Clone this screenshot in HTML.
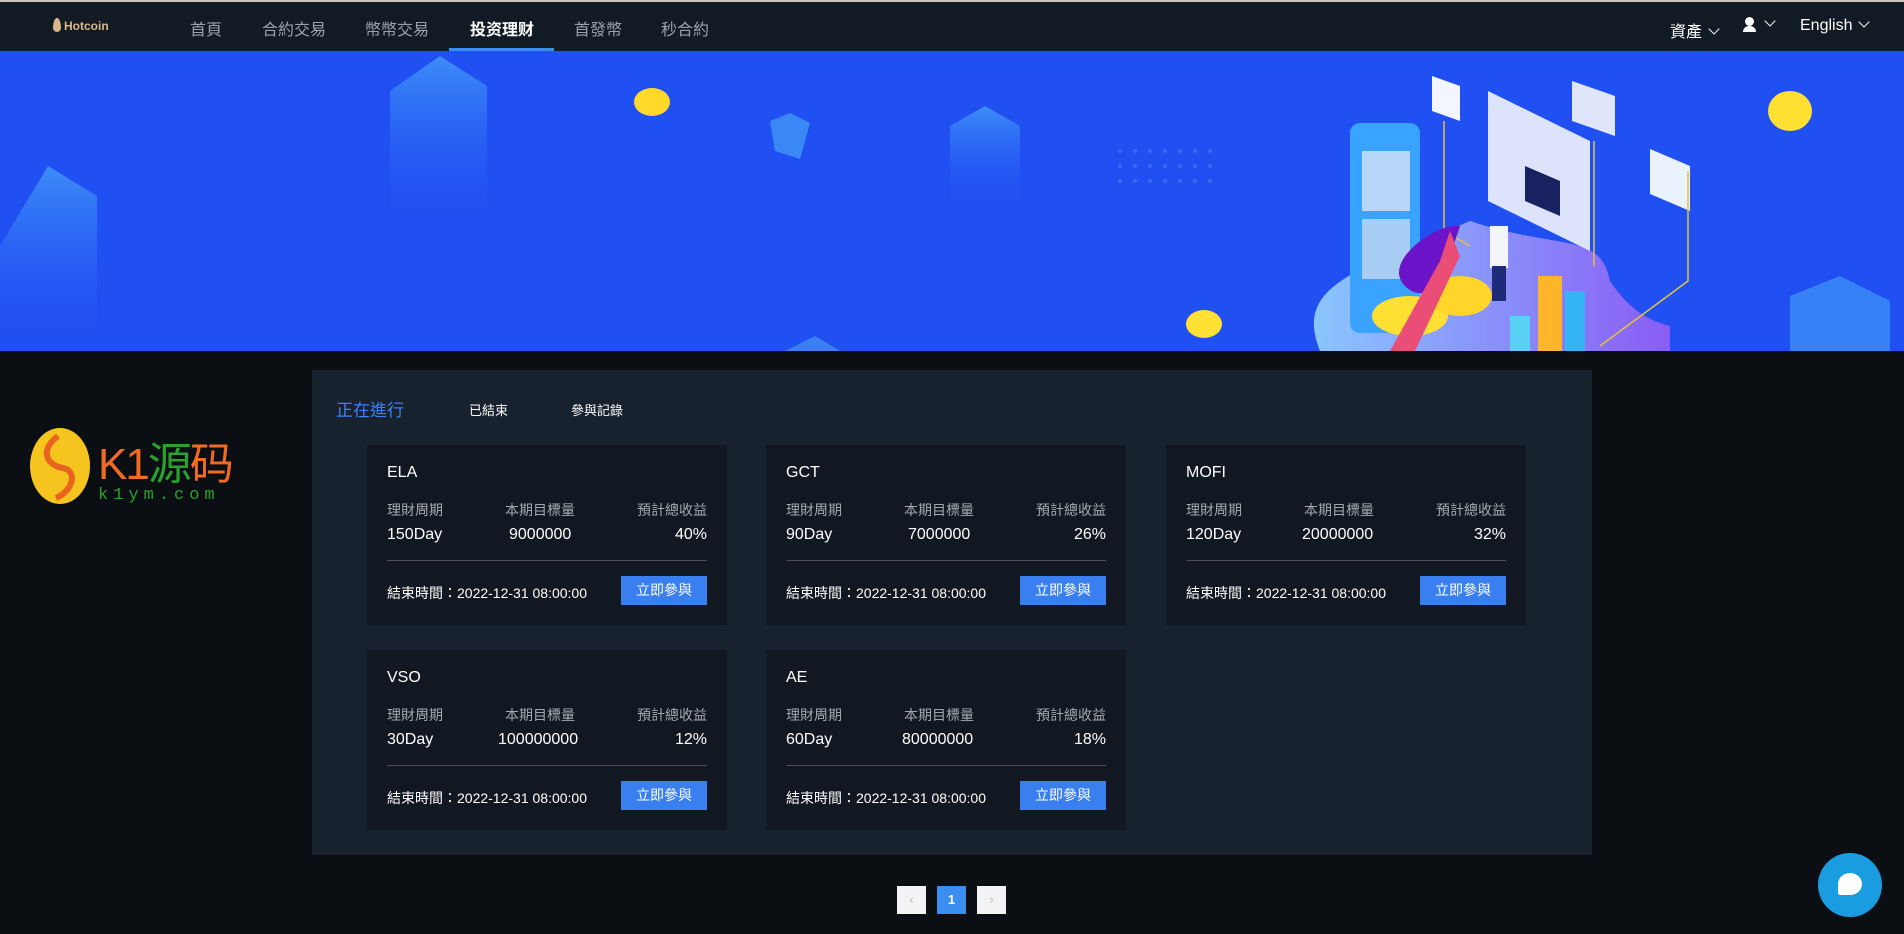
<!DOCTYPE html>
<html><head><meta charset="utf-8"><style>
*{margin:0;padding:0;box-sizing:border-box}
body{width:1904px;height:934px;background:#0b0f14;font-family:"Liberation Sans","Noto Sans CJK TC",sans-serif;color:#fff;position:relative;overflow:hidden}
.nav{position:absolute;left:0;top:0;width:1904px;height:51px;background:#121a24;border-top:2px solid #c9c2bd}
.nav a{position:absolute;top:14px;font-size:16px;color:#9aa3ad;white-space:nowrap}
.nav .act{color:#fff;font-weight:bold}
.ul{position:absolute;left:449px;top:46px;width:105px;height:3px;background:#3b8ff0}
.chev{display:inline-block;width:8px;height:8px;border-right:1.5px solid #fff;border-bottom:1.5px solid #fff;transform:rotate(45deg);margin-left:8px;position:relative;top:-4px}
.banner{position:absolute;left:0;top:51px;width:1904px;height:300px;background:#2150f2;overflow:hidden}
.panel{position:absolute;left:312px;top:370px;width:1280px;height:485px;background:#18222f}
.tab{position:absolute;top:28px;font-size:13px;color:#fff}
.card{position:absolute;width:360px;height:180px;background:#121821}
.card .t{position:absolute;left:20px;top:19px;font-size:16px}
.card .l{position:absolute;top:55px;font-size:14px;color:#a3a9b1}
.card .v{position:absolute;top:81px;font-size:16px}
.card .hr{position:absolute;left:20px;right:20px;top:115px;height:1px;background:#4a4f55}
.card .f{position:absolute;left:20px;top:138px;font-size:14px}
.card .b{position:absolute;left:254px;top:131px;width:86px;height:29px;background:#3a7ff0;font-size:14px;text-align:center;line-height:29px}
.pg{position:absolute;top:886px;width:29px;height:28px;background:#f2f3f5;color:#bbb;text-align:center;line-height:28px;font-size:13px}
</style></head><body>
<div class="nav">
 <div style="position:absolute;left:53px;top:16px;width:8px;height:14px;background:#d9b98a;border-radius:50% 50% 50% 50%/70% 70% 30% 30%"></div>
 <div style="position:absolute;left:64px;top:17px;font-size:12px;font-weight:bold;color:#d9b98a">Hotcoin</div>
 <a style="left:190px">首頁</a><a style="left:262px">合約交易</a><a style="left:365px">幣幣交易</a><a class="act" style="left:470px">投资理财</a><a style="left:574px">首發幣</a><a style="left:661px">秒合約</a>
 <div class="ul"></div>
 <a style="left:1670px;color:#fff;top:16px">資產<span class="chev"></span></a>
 <div style="position:absolute;left:1745px;top:15px;width:9px;height:9px;background:#fff;border-radius:50%"></div>
 <div style="position:absolute;left:1743px;top:24px;width:13px;height:6px;background:#fff;border-radius:6px 6px 0 0"></div>
 <a style="left:1758px;top:14px"><span class="chev"></span></a>
 <a style="left:1800px;color:#fff;top:15px">English<span class="chev"></span></a>
</div>
<div class="banner">
<svg width="1904" height="300">
 <defs>
  <linearGradient id="cb" x1="0" y1="0" x2="0" y2="1"><stop offset="0" stop-color="#3d8df8"/><stop offset="1" stop-color="#2150f2" stop-opacity="0"/></linearGradient>
  <linearGradient id="pl" x1="0" y1="0" x2="1" y2="0"><stop offset="0" stop-color="#8ac6ff"/><stop offset="1" stop-color="#8a5cf5"/></linearGradient>
 </defs>
 <polygon points="0,195 48,115 97,145 97,300 0,300" fill="url(#cb)"/>
 <polygon points="390,40 440,5 487,35 487,180 390,180" fill="url(#cb)"/>
 <polygon points="950,75 985,55 1020,75 1020,160 950,160" fill="url(#cb)"/>
 <polygon points="770,70 790,62 810,72 800,108 775,100" fill="#3a88f5"/>
 <polygon points="785,300 815,285 840,300" fill="#3d7ef6"/>
 <polygon points="1790,245 1840,225 1890,250 1890,300 1790,300" fill="#3d8df8" opacity=".8"/>
 <ellipse cx="652" cy="51" rx="18" ry="14" fill="#ffd92a"/>
 <ellipse cx="1790" cy="60" rx="22" ry="20" fill="#ffe033"/>
 <ellipse cx="1204" cy="273" rx="18" ry="14" fill="#ffe033"/>
 <g fill="#5a7ff8" opacity=".5">
  <circle cx="1120" cy="100" r="2"/><circle cx="1135" cy="100" r="2"/><circle cx="1150" cy="100" r="2"/><circle cx="1165" cy="100" r="2"/><circle cx="1180" cy="100" r="2"/><circle cx="1195" cy="100" r="2"/><circle cx="1210" cy="100" r="2"/>
  <circle cx="1120" cy="115" r="2"/><circle cx="1135" cy="115" r="2"/><circle cx="1150" cy="115" r="2"/><circle cx="1165" cy="115" r="2"/><circle cx="1180" cy="115" r="2"/><circle cx="1195" cy="115" r="2"/><circle cx="1210" cy="115" r="2"/>
  <circle cx="1120" cy="130" r="2"/><circle cx="1135" cy="130" r="2"/><circle cx="1150" cy="130" r="2"/><circle cx="1165" cy="130" r="2"/><circle cx="1180" cy="130" r="2"/><circle cx="1195" cy="130" r="2"/><circle cx="1210" cy="130" r="2"/>
 </g>
 <path d="M1320,300 C1300,250 1330,230 1400,200 L1470,170 C1560,200 1600,180 1610,230 C1630,260 1650,270 1670,275 L1670,300 Z" fill="url(#pl)"/>
 <rect x="1350" y="72" width="70" height="210" rx="10" fill="#3aa3ff"/>
 <rect x="1362" y="100" width="48" height="60" fill="#b8d6f7"/>
 <rect x="1362" y="168" width="48" height="60" fill="#a8cdf5"/>
 <polygon points="1488,40 1590,90 1590,200 1488,150" fill="#dce3fb"/>
 <polygon points="1525,115 1560,130 1560,165 1525,150" fill="#1a2160"/>
 <rect x="1490" y="175" width="18" height="42" fill="#f2f4f8"/>
 <rect x="1492" y="215" width="14" height="35" fill="#1d2b7a"/>
 <polygon points="1650,98 1690,115 1690,160 1650,143" fill="#eaf2ff"/>
 <polygon points="1432,25 1460,35 1460,70 1432,60" fill="#f4f6ff"/>
 <polygon points="1572,30 1615,45 1615,85 1572,70" fill="#dfe6fb"/>
 <path d="M1444,70 V180 L1470,195 M1594,90 V215 M1688,120 V230 L1600,295" stroke="#e6c23a" fill="none" stroke-width="1.5"/>
 <ellipse cx="1410" cy="265" rx="38" ry="20" fill="#ffe033"/>
 <ellipse cx="1460" cy="245" rx="32" ry="20" fill="#ffd52a"/>
 <path d="M1460,175 C1440,170 1380,210 1405,235 C1420,250 1440,240 1445,220 Z" fill="#6b14c9"/>
 <path d="M1390,300 L1440,210 L1450,180 L1460,205 L1415,300 Z" fill="#ea4e76"/>
 <rect x="1538" y="225" width="24" height="75" fill="#ffb52a"/>
 <rect x="1565" y="240" width="20" height="60" fill="#35b4f5"/>
 <rect x="1510" y="265" width="20" height="35" fill="#5ad0f5"/>
</svg>
</div>
<svg style="position:absolute;left:28px;top:426px" width="64" height="80"><ellipse cx="32" cy="40" rx="30" ry="38" fill="#f6c41e"/><path d="M30,10 C10,25 20,40 35,42 C50,45 45,65 28,72" stroke="#e8641f" stroke-width="6" fill="none"/></svg>
<div style="position:absolute;left:98px;top:428px;font-size:44px;color:#f26b22;letter-spacing:-2px">K1<span style="color:#2aa12a">源</span>码</div>
<div style="position:absolute;left:98px;top:486px;font-size:17px;color:#2aa12a;letter-spacing:5px;font-family:'Liberation Mono',monospace">k1ym.com</div>

<div class="panel">
 <div class="tab" style="left:24px;top:26px;font-size:17px;color:#3b82f6">正在進行</div>
 <div class="tab" style="left:157px;top:30px">已結束</div>
 <div class="tab" style="left:259px;top:30px">參與記錄</div>
</div>
<div class="card" style="left:367px;top:445px"><div class="t">ELA</div><div class="l" style="left:20px">理財周期</div><div class="l" style="left:138px">本期目標量</div><div class="l" style="right:20px">預計總收益</div><div class="v" style="left:20px">150Day</div><div class="v" style="left:142px">9000000</div><div class="v" style="right:20px">40%</div><div class="hr"></div><div class="f">結束時間：2022-12-31 08:00:00</div><div class="b">立即參與</div></div>
<div class="card" style="left:766px;top:445px"><div class="t">GCT</div><div class="l" style="left:20px">理財周期</div><div class="l" style="left:138px">本期目標量</div><div class="l" style="right:20px">預計總收益</div><div class="v" style="left:20px">90Day</div><div class="v" style="left:142px">7000000</div><div class="v" style="right:20px">26%</div><div class="hr"></div><div class="f">結束時間：2022-12-31 08:00:00</div><div class="b">立即參與</div></div>
<div class="card" style="left:1166px;top:445px"><div class="t">MOFI</div><div class="l" style="left:20px">理財周期</div><div class="l" style="left:138px">本期目標量</div><div class="l" style="right:20px">預計總收益</div><div class="v" style="left:20px">120Day</div><div class="v" style="left:136px">20000000</div><div class="v" style="right:20px">32%</div><div class="hr"></div><div class="f">結束時間：2022-12-31 08:00:00</div><div class="b">立即參與</div></div>
<div class="card" style="left:367px;top:650px"><div class="t">VSO</div><div class="l" style="left:20px">理財周期</div><div class="l" style="left:138px">本期目標量</div><div class="l" style="right:20px">預計總收益</div><div class="v" style="left:20px">30Day</div><div class="v" style="left:131px">100000000</div><div class="v" style="right:20px">12%</div><div class="hr"></div><div class="f">結束時間：2022-12-31 08:00:00</div><div class="b">立即參與</div></div>
<div class="card" style="left:766px;top:650px"><div class="t">AE</div><div class="l" style="left:20px">理財周期</div><div class="l" style="left:138px">本期目標量</div><div class="l" style="right:20px">預計總收益</div><div class="v" style="left:20px">60Day</div><div class="v" style="left:136px">80000000</div><div class="v" style="right:20px">18%</div><div class="hr"></div><div class="f">結束時間：2022-12-31 08:00:00</div><div class="b">立即參與</div></div>

<div class="pg" style="left:897px">‹</div>
<div class="pg" style="left:937px;background:#3a8ef0;color:#fff;font-weight:bold">1</div>
<div class="pg" style="left:977px">›</div>
<div style="position:absolute;left:1818px;top:853px;width:64px;height:64px;border-radius:50%;background:#1a9de0"></div>
<div style="position:absolute;left:1838px;top:873px;width:24px;height:22px;border-radius:50% 50% 50% 10%;background:#fff"></div>
</body></html>
